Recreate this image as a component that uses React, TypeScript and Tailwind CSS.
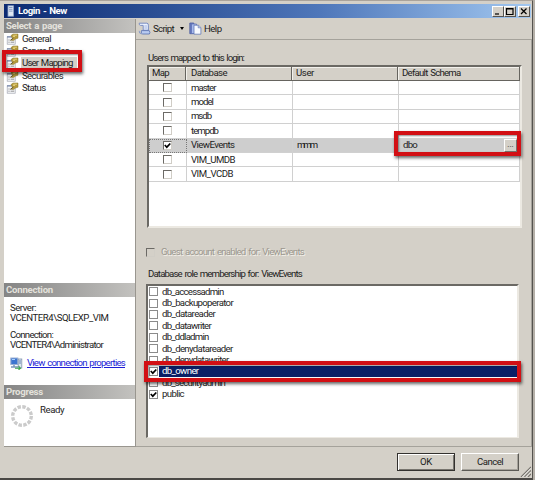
import { useLayoutEffect, useRef } from "react";

// A run of text whose letter spacing is tuned so that it fills the width w.
function Fit({ t, w, className = "" }: { t: string; w: number; className?: string }) {
  const ref = useRef<HTMLSpanElement>(null);
  useLayoutEffect(() => {
    const el = ref.current;
    if (!el) return;
    el.style.letterSpacing = "0px";
    const natural = el.getBoundingClientRect().width;
    el.style.letterSpacing = `${(w - natural) / t.length}px`;
  }, [t, w]);
  return (
    <span ref={ref} className={`inline-block shrink-0 whitespace-pre [word-spacing:1px] ${className}`}>
      {t}
    </span>
  );
}

function Check({ on = false, flat = false, disabled = false }: { on?: boolean; flat?: boolean; disabled?: boolean }) {
  const edge = flat
    ? "border border-[#8b8b8b]"
    : "border border-t-[#6c6a66] border-l-[#6c6a66] border-b-[#d0cdc6] border-r-[#d0cdc6]";
  return (
    <span className={`flex size-[9px] shrink-0 items-center justify-center ${edge} ${disabled ? "bg-[#d4d0c8]" : "bg-white"}`}>
      {on && (
        <svg viewBox="0 0 7 7" className="size-[7px]">
          <path d="M0.8 3 L2.8 5.2 L6.3 1.5" fill="none" stroke="#000" strokeWidth="1.7" />
        </svg>
      )}
    </span>
  );
}

function PageIcon() {
  return (
    <svg viewBox="0 0 13 12" className="h-[12px] w-[13px] shrink-0">
      <rect x="1.2" y="3.8" width="8" height="7.4" fill="#f6f7fa" stroke="#a3a5b0" strokeWidth="0.7" />
      <path d="M1 3.9h5" stroke="#6c7fa6" strokeWidth="1.1" />
      <path d="M2.4 7h1.2M2.4 9.2h1.2M4.6 9.2h3.6" stroke="#777" strokeWidth="0.8" />
      <path d="M5 2.6 7 1h5v4.2L9.5 6 7.6 7.6 4.6 7.2l1.8-1.9z" fill="#b59a3a" stroke="#857433" strokeWidth="0.5" />
      <path d="M7.3 2.2h3.6M7 3.4h2" stroke="#ead98a" strokeWidth="0.9" />
      <path d="M4.4 7.4 7.4 5" stroke="#4b4636" strokeWidth="0.8" />
    </svg>
  );
}

const pages: [string, number][] = [
  ["General", 29],
  ["Server Roles", 47],
  ["User Mapping", 50.5],
  ["Securables", 41],
  ["Status", 23.5],
];

const dbs: [string, number][] = [
  ["master", 24.5],
  ["model", 22],
  ["msdb", 20],
  ["tempdb", 27],
  ["ViewEvents", 43.5],
  ["VIM_UMDB", 44],
  ["VIM_VCDB", 42],
];

const roles: [string, number][] = [
  ["db_accessadmin", 61.5],
  ["db_backupoperator", 71],
  ["db_datareader", 53],
  ["db_datawriter", 49],
  ["db_ddladmin", 46.5],
  ["db_denydatareader", 70.5],
  ["db_denydatawriter", 66.5],
  ["db_owner", 36.5],
  ["db_securityadmin", 63],
  ["public", 22],
];

const columns: [string, number, string][] = [
  ["Map", 17, "w-[37px] pl-[3px]"],
  ["Database", 36, "w-[106px] pl-[5px]"],
  ["User", 18, "w-[106px] pl-[4px]"],
  ["Default Schema", 58.5, "w-[122px] pl-[4px]"],
];

function SideHeader({ t, w }: { t: string; w: number }) {
  return (
    <div className="flex h-[14px] shrink-0 items-center bg-linear-to-r from-[#858585] to-[#c3c2bf] pl-[2px] font-bold text-[#e4e2dc]">
      <Fit t={t} w={w} />
    </div>
  );
}

function RedBox({ className }: { className: string }) {
  return (
    <div className={`absolute border-4 border-[#d20f14] shadow-[1px_2px_3px_rgba(0,0,0,0.6),inset_1px_1px_2px_rgba(0,0,0,0.45)] ${className}`} />
  );
}

function Sidebar() {
  return (
    <div className="flex h-[428px] w-[132px] shrink-0 flex-col border-r border-b border-[#99968f] bg-white">
      <SideHeader t="Select a page" w={56} />
      <div className="flex h-[250px] flex-col">
        {pages.map(([t, w], i) => (
          <div key={t} className="flex h-[12.2px] shrink-0 items-center pl-[2px]">
            <PageIcon />
            <div className={`ml-[2px] flex h-[12px] items-center pl-[1px] ${i === 2 ? "bg-[#d4d0c8] pr-[4px]" : ""}`}>
              <Fit t={t} w={w} />
            </div>
          </div>
        ))}
      </div>
      <SideHeader t="Connection" w={47} />
      <div className="flex h-[88px] flex-col pt-[6px] pl-[6px]">
        <div className="flex h-[10px] items-center"><Fit t="Server:" w={26} /></div>
        <div className="flex h-[10px] items-center"><Fit t="VCENTER4\SQLEXP_VIM" w={98.5} /></div>
        <div className="mt-[7px] flex h-[10px] items-center"><Fit t="Connection:" w={43} /></div>
        <div className="flex h-[10px] items-center"><Fit t="VCENTER4\Administrator" w={93} /></div>
        <div className="mt-[6px] flex h-[14px] items-center">
          <svg viewBox="0 0 13 13" className="size-[13px]">
            <rect x="0.8" y="1" width="7" height="6.5" fill="#3c75d0" stroke="#9ab0d4" />
            <path d="M2 2.5h3" stroke="#a9d1ff" />
            <path d="M1 10h7M4 8v2" stroke="#7b96bb" strokeWidth="1.5" />
            <rect x="8.2" y="2" width="3.6" height="9" fill="#dce7f1" stroke="#7f93ad" strokeWidth="0.8" />
            <path d="M9 4h2M9 6h2" stroke="#486aa6" strokeWidth="0.8" />
            <path d="M5 11.2h5M8.5 9l2 2.2-2 1.7" stroke="#3aa64a" fill="none" strokeWidth="1.1" />
          </svg>
          <Fit t="View connection properties" w={98} className="ml-[4px] text-[#1d1dd6] underline" />
        </div>
      </div>
      <SideHeader t="Progress" w={37} />
      <div className="flex pl-[6px]">
        <svg viewBox="-12 -12 24 24" className="mt-[5px] size-[24px]">
          <circle r="9.3" fill="none" stroke="#cbcbcb" strokeWidth="3.4" strokeDasharray="3.45 1.42" />
        </svg>
        <div className="mt-[6px] ml-[6px] flex h-[10px] items-center"><Fit t="Ready" w={24} /></div>
      </div>
    </div>
  );
}

function Toolbar() {
  return (
    <div className="flex h-[21px] shrink-0 items-center border-b border-[#a5a29b] pb-[1px] pl-[2px]">
      <svg viewBox="0 0 13 13" className="size-[13px]">
        <path d="M1.2 1.2h7.6q1.6 0 1.6 2v5H5.2V3.4H2.4Q1 3.2 1.2 1.2z" fill="#eaf1ff" stroke="#6f86bf" strokeWidth="0.9" />
        <path d="M3.4 8.6h7.8q1.4 1.8.2 3.4H4.6Q2.6 11.6 3.4 8.6z" fill="#b9cbf1" stroke="#6178b4" strokeWidth="0.9" />
        <path d="M1.2 8.8q-.4 3 2.8 3.2" fill="none" stroke="#8296c8" strokeWidth="0.9" />
        <path d="M6.3 4h3M6.3 6h3" stroke="#94a7d6" strokeWidth="0.8" />
      </svg>
      <Fit t="Script" w={21} className="ml-[2px]" />
      <span className="ml-[6px] size-0 border-x-2 border-t-[3px] border-x-transparent border-t-black" />
      <svg viewBox="0 0 13 13" className="ml-[5px] size-[13px]">
        <path d="M.8 1h4v10.7h-4z" fill="#6a7fc4" stroke="#4d5c9e" strokeWidth="0.8" />
        <path d="M2.5 2h5v2h2v7.5h-7z" fill="#a9bbed" stroke="#5b6db0" strokeWidth="0.7" />
        <path d="M5 3.2h4.3l2.6 2.4v6.6H5z" fill="#f8faff" stroke="#6578b3" strokeWidth="0.8" />
        <path d="M9.2 3.4v2.4h2.5" fill="#ccd6f2" stroke="#6578b3" strokeWidth="0.7" />
      </svg>
      <Fit t="Help" w={17.5} className="ml-[2px]" />
    </div>
  );
}

function MappingTable() {
  return (
    <div className="h-[163px] w-[375px] border-2 border-t-[#6b6964] border-r-[#ece9e2] border-b-[#ece9e2] border-l-[#6b6964] bg-white">
      <div className="flex h-[14px] w-[371px]">
        {columns.map(([t, w, c]) => (
          <div key={t} className={`flex h-[14px] shrink-0 items-center border-r border-b border-[#66645f] bg-[#d4d0c8] pb-px shadow-[inset_1px_1px_0_#f3f1ec] ${c}`}>
            <Fit t={t} w={w} />
          </div>
        ))}
      </div>
      {dbs.map(([t, w], i) => (
        <div key={t} className={`flex h-[14.4px] w-[371px] ${i === 4 ? "bg-[#cecece]" : ""}`}>
          <div className={`flex w-[38px] shrink-0 items-center justify-center border-r border-b border-[#d0d0d0] pr-[1px] ${i === 4 ? "outline-1 -outline-offset-1 outline-dotted outline-[#777]" : ""}`}>
            <Check on={i === 4} />
          </div>
          <div className="flex w-[106px] shrink-0 items-center border-r border-b border-[#d0d0d0] pl-[4px]">
            <Fit t={t} w={w} />
          </div>
          <div className="flex w-[106px] shrink-0 items-center border-r border-b border-[#d0d0d0] pl-[4px]">
            {i === 4 && <Fit t="mmm" w={19} />}
          </div>
          <div className="flex w-[121px] shrink-0 items-center justify-between border-r border-b border-[#d0d0d0] pr-[2px] pl-[4px]">
            {i === 4 && (
              <>
                <Fit t="dbo" w={14} />
                <span className="flex h-[13px] w-[13px] items-center justify-center border border-t-white border-r-[#77746e] border-b-[#77746e] border-l-white bg-[#d4d0c8] text-[8px]">
                  ...
                </span>
              </>
            )}
          </div>
        </div>
      ))}
    </div>
  );
}

function RoleList() {
  return (
    <div className="h-[154px] w-[373px] border-t-2 border-r-2 border-b border-l-2 border-t-[#6b6964] border-r-[#ece9e2] border-b-[#ece9e2] border-l-[#6b6964] bg-white">
      {roles.map(([t, w], i) => (
        <div key={t} className="flex h-[11.4px] items-center pl-[1px]">
          <Check flat on={i === 7 || i === 9} />
          <div className={`ml-px flex h-[11px] grow items-center pl-[3px] ${i === 7 ? "bg-[#0a1f66] text-white" : ""}`}>
            <Fit t={t} w={w} />
          </div>
        </div>
      ))}
    </div>
  );
}

function CaptionButton({ d }: { d: string }) {
  return (
    <span className="flex h-[11px] w-[12px] items-center justify-center border border-t-white border-r-[#55534f] border-b-[#55534f] border-l-white bg-[#d4d0c8]">
      <svg viewBox="0 0 10 9" className="h-[9px] w-[10px]">
        <path d={d} fill="none" stroke="#000" strokeWidth="1.2" />
      </svg>
    </span>
  );
}

export default function App() {
  return (
    <div className="relative flex h-[480px] w-[535px] overflow-hidden bg-[#b5b0a8] font-[Roboto,'Liberation_Sans',sans-serif] text-[9.6px] leading-[10px] text-[#1c1c1c]">
      <div className="flex h-[480px] w-[533px] shrink-0 flex-col border-t border-r border-b-2 border-t-[#aaa39b] border-r-[#55534f] border-b-[#4a4845] bg-[#d4d0c8] pt-[3px] pl-[4px]">
        <div className="flex h-[14px] w-[527px] shrink-0 items-center bg-linear-to-r from-[#0c2a72] via-[#4f77ba] via-60% to-[#a3c8f0] pr-[1px] pl-[3px] font-bold text-white">
          <svg viewBox="0 0 8 12" className="h-[12px] w-[8px]">
            <rect x="1" y="0.8" width="5.5" height="10.4" fill="#dfe8f3" stroke="#8da3c5" strokeWidth="0.8" />
            <path d="M2 2.5h3.5M2 4.3h3.5M2 6.1h3.5" stroke="#7287b2" strokeWidth="0.8" />
          </svg>
          <Fit t="Login - New" w={49} className="ml-[3px]" />
          <div className="ml-auto flex">
            <CaptionButton d="M2 7H6" />
            <CaptionButton d="M1.5 1.5H8V7.5H1.5ZM1.5 2H8" />
            <span className="w-[2px]" />
            <CaptionButton d="M2 1.5 7.5 7M7.5 1.5 2 7" />
          </div>
        </div>
        <div className="mt-[1px] flex h-[428px] shrink-0">
          <Sidebar />
          <div className="flex w-[396px] shrink-0 flex-col border-b border-[#a5a29b]">
            <Toolbar />
            <div className="flex grow flex-col border-r border-[#a5a29b] pl-[11px]">
              <div className="mt-[13px] flex h-[10px] items-center pl-[1px]"><Fit t="Users mapped to this login:" w={96} /></div>
              <div className="mt-[2px]"><MappingTable /></div>
              <div className="mt-[18px] -ml-px flex h-[12px] items-center">
                <Check disabled />
                <Fit t="Guest account enabled for: ViewEvents" w={143} className="ml-[6px] text-[#9b978f] [text-shadow:1px_1px_0_#f3f0ea]" />
              </div>
              <div className="mt-[11px] flex h-[10px] items-center pl-[1px]"><Fit t="Database role membership for: ViewEvents" w={154} /></div>
              <div className="mt-[5px] -ml-[1px]"><RoleList /></div>
            </div>
          </div>
        </div>
        <div className="flex h-[30px] shrink-0 justify-end pt-[6px] pr-[1px]">
          <div className="flex h-[18px] w-[58px] items-center justify-center border border-[#33312e] shadow-[inset_1px_1px_0_#fff,inset_-1px_-1px_0_#77746e]">
            <Fit t="OK" w={12} />
          </div>
          <div className="ml-[6px] flex h-[18px] w-[58px] items-center justify-center border border-t-white border-r-[#5c5a55] border-b-[#5c5a55] border-l-white shadow-[inset_-1px_-1px_0_#a5a29b]">
            <Fit t="Cancel" w={26} />
          </div>
          <svg viewBox="0 0 11 11" className="mt-[13px] ml-[1px] size-[11px]">
            <path d="M1 11 11 1M4.5 11 11 4.5M8 11l3-3" stroke="#77746e" strokeWidth="1.2" />
            <path d="M2.2 11 11 2.2M5.7 11 11 5.7" stroke="#fff" strokeWidth="0.6" />
          </svg>
        </div>
      </div>
      <RedBox className="top-[50px] left-[2px] h-[22px] w-[80px]" />
      <RedBox className="top-[131px] left-[394px] h-[25px] w-[127px]" />
      <RedBox className="top-[361px] left-[144px] h-[21px] w-[377px]" />
    </div>
  );
}
